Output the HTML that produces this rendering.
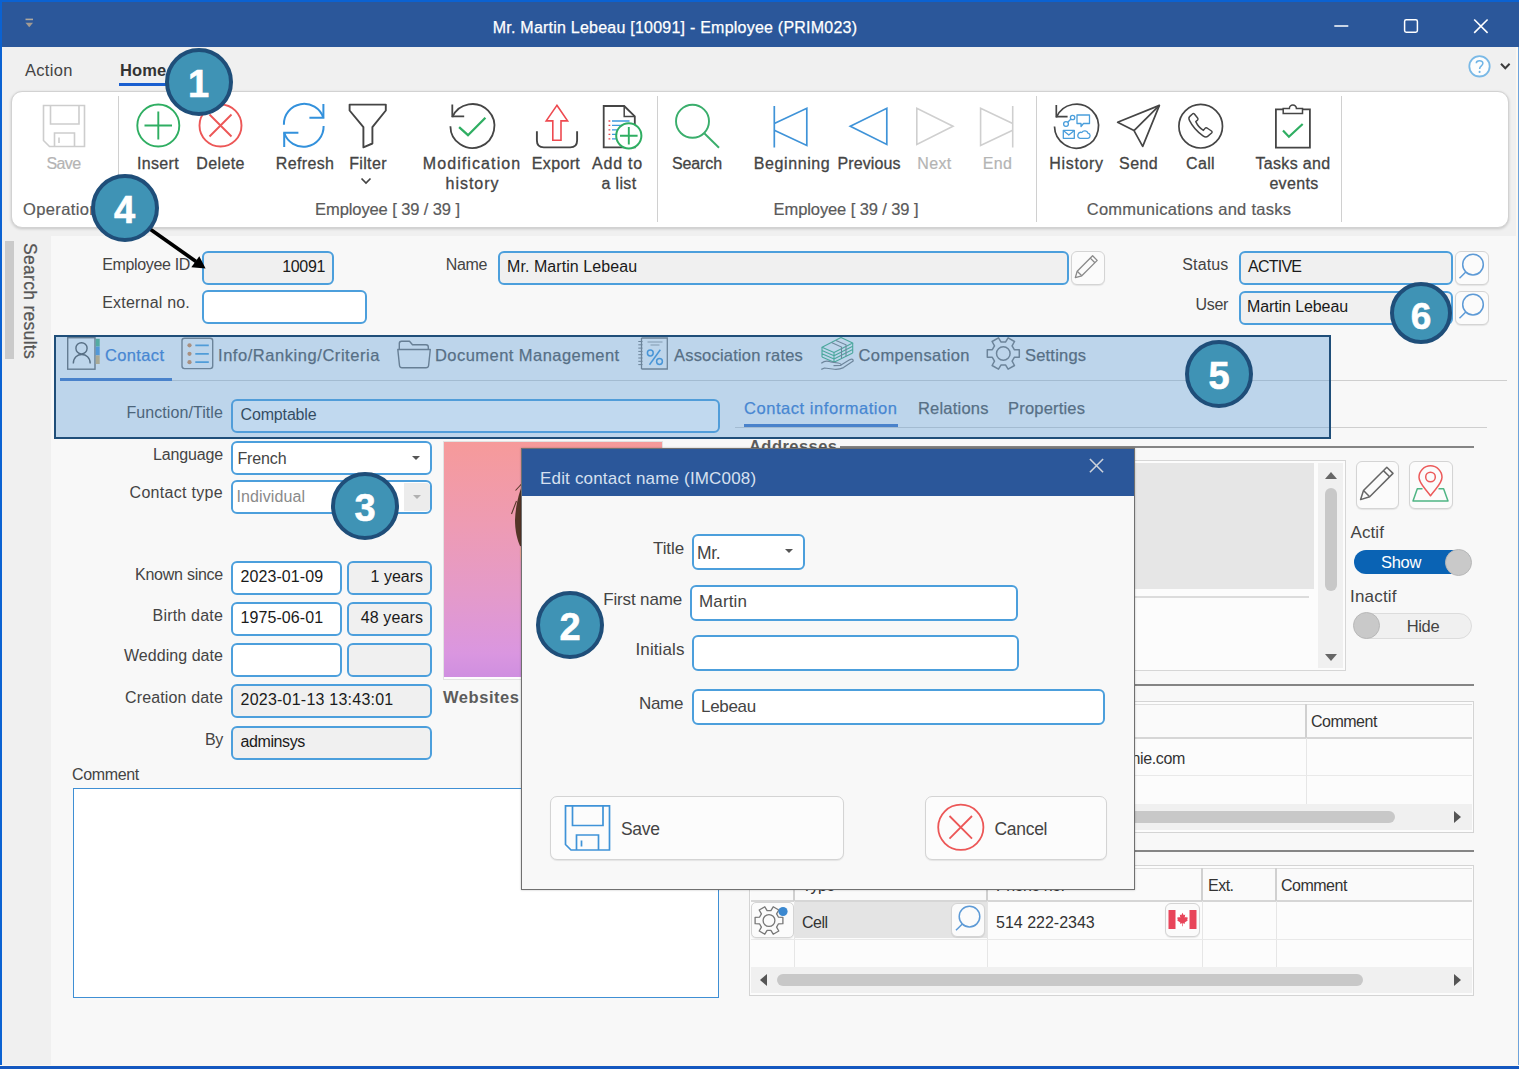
<!DOCTYPE html>
<html>
<head>
<meta charset="utf-8">
<title>Employee</title>
<style>
*{box-sizing:border-box;margin:0;padding:0}
html,body{width:1519px;height:1069px;overflow:hidden}
body{font-family:"Liberation Sans",sans-serif;font-size:16px;color:#333;background:#f0f0f0;position:relative}
.abs{position:absolute}
#win{position:absolute;left:0;top:0;width:1519px;height:1069px;background:#f0f0f0;overflow:hidden}
#titlebar{position:absolute;left:0;top:0;width:1519px;height:47px;background:#2b579a}
#bL{position:absolute;left:0;top:0;width:2px;height:1069px;background:#0b62d2;z-index:50}
#bT{position:absolute;left:0;top:0;width:1519px;height:2px;background:#0b62d2;z-index:50}
#bB{position:absolute;left:0;top:1065px;width:1519px;height:4px;background:linear-gradient(180deg,#fbf7f0 0,#fbf7f0 1.3px,#1458c0 1.3px,#1458c0 4px);z-index:50}
#bR{position:absolute;left:1516px;top:47px;width:3px;height:1022px;background:linear-gradient(90deg,#fbf7f0 0,#fbf7f0 1.6px,#6ea3dd 1.6px,#6ea3dd 3px);z-index:49}
.t{position:absolute;white-space:nowrap;line-height:20px;height:20px}
/* ribbon */
#ribbon{position:absolute;left:11px;top:91px;width:1498px;height:137px;background:#fff;border:1px solid #d2d2d2;border-radius:11px;box-shadow:0 1px 3px rgba(0,0,0,.18)}
.rsep{position:absolute;top:96px;width:1px;height:126px;background:#d0d0d0}
.rl{position:absolute;white-space:nowrap;font-size:16px;line-height:20px;color:#444;-webkit-text-stroke:.3px #444;text-align:center;transform:translateX(-50%);letter-spacing:.35px}
.rl.dis{color:#b4b4b4;-webkit-text-stroke:.2px #b4b4b4}
.gl{position:absolute;white-space:nowrap;font-size:16.5px;line-height:20px;color:#5a5a5a;-webkit-text-stroke:.2px #5a5a5a;top:199px;transform:translateX(-50%);letter-spacing:-.1px}
/* content */
#side{position:absolute;left:2px;top:236px;width:49px;height:830px;background:#f0f0f0}
#main{position:absolute;left:51px;top:236px;width:1465px;height:830px;background:#f8f8f8}
.lbl{position:absolute;white-space:nowrap;font-size:16px;line-height:20px;color:#444;text-align:right;letter-spacing:-.35px}
.inp{position:absolute;border:2px solid #4c9fdc;border-radius:6px;background:#fff;font-size:16px;line-height:29px;color:#1a1a1a;padding-left:7px;white-space:nowrap;overflow:hidden;letter-spacing:-.35px}
.inp.ro{background:#f0f0f0}
.inp.r{text-align:right;padding-right:7px;padding-left:0}
.btn{position:absolute;border:1px solid #d4d4d4;border-radius:6px;background:#fbfbfb;box-shadow:0 1px 1px rgba(0,0,0,.08)}
.tab{position:absolute;top:345px;white-space:nowrap;font-size:16.5px;line-height:20px;color:#555;letter-spacing:.55px;-webkit-text-stroke:.25px currentColor}
.cell{position:absolute;white-space:nowrap;font-size:16px;line-height:20px;color:#333;letter-spacing:-.5px}
.bubble{position:absolute;width:68px;height:68px;border-radius:50%;background:#3f93b5;border:4px solid #1f4e79;color:#fff;font-weight:bold;font-size:38px;line-height:65px;text-align:center;z-index:40;-webkit-text-stroke:.6px #fff}
</style>
</head>
<body>
<div id="win">
<div id="titlebar"></div>
<div class="t" style="left:0;width:1350px;top:18px;text-align:center;color:#fff;font-size:16px;letter-spacing:.23px;-webkit-text-stroke:.25px #fff">Mr. Martin Lebeau [10091] - Employee (PRIM023)</div>

<!-- menu -->
<div class="t" style="left:25px;top:60px;font-size:16.5px;color:#444;letter-spacing:.3px">Action</div>
<div class="t" style="left:120px;top:60px;font-size:16.5px;color:#333;font-weight:bold;letter-spacing:.1px">Home</div>
<div class="abs" style="left:119px;top:83px;width:50px;height:3px;background:#1a5fd0"></div>

<div id="ribbon"></div>
<div class="rsep" style="left:118px"></div>
<div class="rsep" style="left:657px"></div>
<div class="rsep" style="left:1036px"></div>
<div class="rsep" style="left:1341px"></div>
<!-- title bar controls -->
<svg class="abs" style="left:20px;top:14px" width="20" height="18" viewBox="0 0 20 18"><rect x="5.5" y="4.6" width="7.5" height="1.6" fill="#b0a89e"/><path d="M5.5 8.8 L13 8.8 L9.25 13.2 Z" fill="#a39b92"/></svg>
<svg class="abs" style="left:1325px;top:12px" width="180" height="30" viewBox="1325 12 180 30" fill="none" stroke="#fff" stroke-width="1.5"><path d="M1334.3 26 H1348.3"/><rect x="1404.6" y="19.8" width="12.8" height="12.4" rx="1.6"/><path d="M1474.2 19.5 L1487.6 32.9 M1487.6 19.5 L1474.2 32.9" stroke-width="1.6"/></svg>
<!-- help -->
<svg class="abs" style="left:1464px;top:52px" width="50" height="30" viewBox="0 0 50 30" fill="none"><circle cx="15.5" cy="14.3" r="10.2" stroke="#7ab9e6" stroke-width="1.8" fill="#fdfdfd"/><path d="M12.3 11.3 C12.3 7.9 18.9 7.9 18.9 11.3 C18.9 13.9 15.6 13.9 15.6 16.9" stroke="#6fb4e6" stroke-width="1.5"/><circle cx="15.6" cy="19.9" r="1.05" fill="#6fb4e6"/><path d="M37 11.8 L41.3 16.3 L45.6 11.8" stroke="#3c3c3c" stroke-width="2"/></svg>

<!-- ribbon icons: one big svg in page coordinates -->
<svg class="abs" style="left:0;top:95px" width="1519" height="100" viewBox="0 95 1519 100" fill="none" stroke-linecap="butt" stroke-linejoin="miter">
<!-- save (disabled) -->
<g stroke="#cdcdcd" stroke-width="1.6">
<path d="M43.5 105.5 H84.5 V146.5 H49.5 L43.5 140.5 Z"/>
<path d="M50.5 105.5 V124 H79 V105.5"/>
<path d="M54.5 146.5 V133 H74.5 V146.5"/>
<path d="M59 137.5 V143"/>
</g>
<!-- insert -->
<g stroke="#2fae62" stroke-width="1.9"><circle cx="158.3" cy="125.5" r="21"/><path d="M144.5 125.5 H172 M158.3 111.5 V139.5"/></g>
<!-- delete -->
<g stroke="#ec5757" stroke-width="1.9"><circle cx="220.5" cy="125.5" r="21"/><path d="M209.5 114.5 L231.5 136.5 M231.5 114.5 L209.5 136.5"/></g>
<!-- refresh -->
<g stroke="#3391dc" stroke-width="2">
<path d="M283.9 124.8 A20.2 20.2 0 0 1 323.3 117.8"/>
<path d="M309.4 117.8 H323.4 V104"/>
<path d="M323.6 126 A20.2 20.2 0 0 1 284.2 132.8"/>
<path d="M298.4 132.7 H284.2 V146.9"/>
</g>
<!-- filter -->
<g stroke="#454545" stroke-width="1.9">
<path d="M349.6 104.6 H385.8 V110.5 L372.4 127.1 V143.5 L363.4 147.3 V127.1 L349.6 110.5 Z" stroke-linejoin="round"/>
</g>
<path d="M361.5 178.5 L366 183 L370.5 178.5" stroke="#444" stroke-width="1.7"/>
<!-- modification history -->
<g stroke="#454545" stroke-width="1.8">
<path d="M452.3 117.1 A22 22 0 1 1 450.4 126.2"/>
<path d="M452.3 104.5 V116.4 H464.2"/>
</g>
<path d="M459.1 127.2 L468 135.2 L485.4 117.8" stroke="#2fae62" stroke-width="2.3"/>
<!-- export -->
<path d="M536.9 131.2 V140.5 Q536.9 147.4 543.8 147.4 H570.2 Q577.1 147.4 577.1 140.5 V131.2" stroke="#454545" stroke-width="1.9"/>
<path d="M556.9 105.3 L567.6 120.9 H561 V140.3 H552.8 V120.9 H546.2 Z" stroke="#ee4a50" stroke-width="1.6" stroke-linejoin="miter"/>
<!-- add to a list -->
<path d="M603.7 106 H624.2 L634.8 116.4 V147.4 H603.7 Z" stroke="#454545" stroke-width="1.8"/>
<path d="M624.2 106 V116.4 H634.8" stroke="#454545" stroke-width="1.5"/>
<g stroke="#3f9ade" stroke-width="1.3"><path d="M612 121 H629.5 M612 125.4 H626 M612 129.9 H619 M612 134.3 H617 M612 138.8 H617"/></g>
<g stroke="#ee4a50" stroke-width="1.3"><path d="M608.5 121 H610.3 M608.5 125.4 H610.3 M608.5 129.9 H610.3 M608.5 134.3 H610.3 M608.5 138.8 H610.3"/></g>
<circle cx="628.8" cy="135.8" r="12.6" fill="#fff" stroke="#2fae62" stroke-width="2"/>
<path d="M620 135.8 H637.6 M628.8 127 V144.6" stroke="#2fae62" stroke-width="1.9"/>
<!-- search -->
<g stroke="#3aae6c" stroke-width="1.9"><circle cx="692.5" cy="121.3" r="16.5"/><path d="M704.5 133.5 L719 147.8"/></g>
<!-- beginning -->
<g stroke="#3f93d8" stroke-width="1.7"><path d="M774.3 106 V147.5"/><path d="M774.3 123.5 L806.8 108.3 V145.5 L774.3 130.3"/></g>
<!-- previous -->
<path d="M850.3 126.3 L886.8 108.3 V144.5 Z" stroke="#3f93d8" stroke-width="1.7"/>
<!-- next -->
<path d="M953 126.3 L916.8 108.3 V144.5 Z" stroke="#cfcfcf" stroke-width="1.6"/>
<!-- end -->
<g stroke="#cfcfcf" stroke-width="1.6"><path d="M1012.7 106 V147.5"/><path d="M1012.7 123.5 L980.6 108.3 V145.5 L1012.7 130.3"/></g>
<!-- history -->
<g stroke="#454545" stroke-width="1.7">
<path d="M1056.3 117.4 A22 22 0 1 1 1054.5 126.6"/>
<path d="M1056.3 105 V116.7 H1067.6"/>
</g>
<g stroke="#4a9edb" stroke-width="1.3" stroke-linejoin="round">
<path d="M1077 115 H1089.5 V123.5 H1083.5 L1081 126.5 V123.5 H1077 Z"/>
<rect x="1063.3" y="130.3" width="11" height="8"/><path d="M1063.3 130.5 L1068.8 135 L1074.3 130.5"/>
<path d="M1080 138.3 H1088 A2.6 2.6 0 0 0 1088 133.2 A3.4 3.4 0 0 0 1081.8 132.5 A3 3 0 0 0 1080 138.3 Z"/>
<circle cx="1066" cy="124" r="2.4"/><circle cx="1072.6" cy="117.5" r="2.2"/><path d="M1067.7 122.3 L1071 119"/>
</g>
<!-- send -->
<path d="M1159.4 105.4 L1117.6 122.3 L1134 130.6 L1142.7 146.4 Z" stroke="#454545" stroke-width="1.7" stroke-linejoin="round"/>
<path d="M1134 130.6 L1159.4 105.4" stroke="#454545" stroke-width="1.7"/>
<!-- call -->
<circle cx="1200.7" cy="126.2" r="21.8" stroke="#454545" stroke-width="1.7"/>
<path d="M1189.6 116.6 Q1188.2 118 1189.6 120.6 Q1194 129.5 1203 135.8 Q1205.8 137.8 1207.6 136.4 L1211.6 133 Q1212.6 132 1211.5 131 L1207 128 Q1205.8 127.4 1205 128.4 L1203.4 130.4 Q1198.4 127.4 1195.8 121.6 L1197.6 120 Q1198.4 119 1197.6 118 L1194.4 114 Q1193.4 113 1192.4 114 Z" stroke="#454545" stroke-width="1.5" stroke-linejoin="round"/>
<!-- tasks -->
<path d="M1283.2 109.4 H1275.9 V147.6 H1309.9 V109.4 H1302.5" stroke="#454545" stroke-width="1.8"/>
<path d="M1283.2 113.4 V108.4 H1289.4 A3.5 3.5 0 0 1 1296.4 108.4 H1302.5 V113.4 Z" stroke="#454545" stroke-width="1.5"/>
<path d="M1283 130.6 L1288.9 136.8 L1302.7 124" stroke="#2fae62" stroke-width="2.2"/>
</svg>

<!-- ribbon labels -->
<div class="rl dis" style="left:63.5px;top:154px;letter-spacing:-.6px">Save</div>
<div class="rl" style="left:158px;top:154px">Insert</div>
<div class="rl" style="left:220.5px;top:154px">Delete</div>
<div class="rl" style="left:305px;top:154px">Refresh</div>
<div class="rl" style="left:368px;top:154px">Filter</div>
<div class="rl" style="left:472px;top:154px;letter-spacing:1.1px">Modification</div>
<div class="rl" style="left:472.5px;top:174px;letter-spacing:.95px">history</div>
<div class="rl" style="left:556px;top:154px">Export</div>
<div class="rl" style="left:617.5px;top:154px;letter-spacing:.75px">Add to</div>
<div class="rl" style="left:619px;top:174px">a list</div>
<div class="rl" style="left:697px;top:154px;letter-spacing:-.15px">Search</div>
<div class="rl" style="left:792px;top:154px;letter-spacing:.6px">Beginning</div>
<div class="rl" style="left:869px;top:154px;letter-spacing:.1px">Previous</div>
<div class="rl dis" style="left:934.5px;top:154px">Next</div>
<div class="rl dis" style="left:997.5px;top:154px">End</div>
<div class="rl" style="left:1076.5px;top:154px;letter-spacing:.65px">History</div>
<div class="rl" style="left:1138.5px;top:154px">Send</div>
<div class="rl" style="left:1200.5px;top:154px">Call</div>
<div class="rl" style="left:1293px;top:154px">Tasks and</div>
<div class="rl" style="left:1294px;top:174px">events</div>
<div class="gl" style="left:23px;transform:none;letter-spacing:.37px">Operations</div>
<div class="gl" style="left:387.5px">Employee [ 39 / 39 ]</div>
<div class="gl" style="left:846px">Employee [ 39 / 39 ]</div>
<div class="gl" style="left:1189px;letter-spacing:.27px">Communications and tasks</div>

<!--RIBBON-END-->

<div id="side"></div>
<div id="main"></div>
<!-- side -->
<div class="abs" style="left:5px;top:240.7px;width:8.5px;height:118px;background:#cacaca"></div>
<div class="abs" style="left:39px;top:243px;font-size:17.5px;line-height:18px;color:#555;white-space:nowrap;transform-origin:0 0;transform:rotate(90deg);letter-spacing:.3px;-webkit-text-stroke:.25px #555">Search results</div>

<!-- top form -->
<div class="lbl" style="left:60px;width:130px;top:255px">Employee ID</div>
<div class="inp ro r" style="left:202px;top:251px;width:132px;height:33.5px;line-height:27px">10091</div>
<div class="lbl" style="left:60px;width:130px;top:293px;letter-spacing:.2px">External no.</div>
<div class="inp" style="left:202px;top:289.5px;width:165px;height:34px"></div>
<div class="lbl" style="left:400px;width:87px;top:255px">Name</div>
<div class="inp ro" style="left:498px;top:251px;width:571px;height:33.5px;line-height:27px;letter-spacing:.07px">Mr. Martin Lebeau</div>
<div class="btn" style="left:1071px;top:251px;width:34px;height:34px"></div>
<div class="lbl" style="left:1140px;width:88.5px;top:255px;letter-spacing:.15px">Status</div>
<div class="inp ro" style="left:1239px;top:251px;width:214px;height:34px;line-height:27.5px;letter-spacing:-.75px">ACTIVE</div>
<div class="btn" style="left:1455px;top:251px;width:34px;height:34px"></div>
<div class="lbl" style="left:1140px;width:88px;top:295px">User</div>
<div class="inp ro" style="left:1239px;top:291px;width:214px;height:34px;line-height:27px;padding-left:6px;letter-spacing:-.1px">Martin Lebeau</div>
<div class="btn" style="left:1455px;top:291px;width:34px;height:34px"></div>

<!-- main tabs -->
<div class="abs" style="left:60px;top:380px;width:1447px;height:1px;background:#cfcfcf"></div>
<div class="abs" style="left:60px;top:378px;width:112px;height:3px;background:#3f74c6"></div>
<div class="tab" style="left:105px;color:#3c7bd0;letter-spacing:.35px">Contact</div>
<div class="tab" style="left:218px">Info/Ranking/Criteria</div>
<div class="tab" style="left:435px;letter-spacing:.45px">Document Management</div>
<div class="tab" style="left:674px;letter-spacing:.2px">Association rates</div>
<div class="tab" style="left:858.5px;letter-spacing:.42px">Compensation</div>
<div class="tab" style="left:1025px;letter-spacing:.2px">Settings</div>

<div class="lbl" style="left:90px;width:133px;top:403px;letter-spacing:.08px">Function/Title</div>
<div class="inp" style="left:231px;top:399px;width:489px;height:34px;line-height:27px;letter-spacing:-.15px;padding-left:7.5px">Comptable</div>

<!-- sub tabs -->
<div class="abs" style="left:735px;top:427px;width:752px;height:1px;background:#cfcfcf"></div>
<div class="abs" style="left:744px;top:424px;width:154px;height:3px;background:#3f74c6"></div>
<div class="tab" style="left:744px;top:398px;color:#3c7bd0">Contact information</div>
<div class="tab" style="left:918px;top:398px;letter-spacing:.2px">Relations</div>
<div class="tab" style="left:1008px;top:398px;letter-spacing:.2px">Properties</div>

<!-- left column -->
<div class="lbl" style="left:90px;width:133px;top:445px;letter-spacing:-.15px">Language</div>
<div class="inp" style="left:231px;top:441px;width:201px;height:34px;padding-left:4.5px;color:#444;letter-spacing:-.15px;line-height:31px">French</div>
<div class="abs" style="left:412px;top:456px;width:0;height:0;border-left:4px solid transparent;border-right:4px solid transparent;border-top:4px solid #555"></div>
<div class="lbl" style="left:90px;width:133px;top:483px;letter-spacing:.3px">Contact type</div>
<div class="inp" style="left:231px;top:480px;width:201px;height:34px;padding-left:3.5px;color:#8a8a8a;letter-spacing:.1px">Individual</div>
<div class="abs" style="left:404px;top:483px;width:26px;height:28px;background:#ececec;border-radius:0 4px 4px 0"></div>
<div class="abs" style="left:413px;top:495px;width:0;height:0;border-left:4px solid transparent;border-right:4px solid transparent;border-top:4px solid #b0b0b0"></div>

<div class="lbl" style="left:90px;width:133px;top:565px;letter-spacing:-.25px">Known since</div>
<div class="inp" style="left:231px;top:561px;width:111px;height:34px;padding-left:7.5px;line-height:27.5px;letter-spacing:.08px">2023-01-09</div>
<div class="inp ro r" style="left:347px;top:561px;width:85px;height:34px;line-height:27.5px;letter-spacing:0px">1 years</div>
<div class="lbl" style="left:90px;width:133px;top:606px;letter-spacing:.2px">Birth date</div>
<div class="inp" style="left:231px;top:602px;width:111px;height:34px;padding-left:7.5px;line-height:27.5px;letter-spacing:.08px">1975-06-01</div>
<div class="inp ro r" style="left:347px;top:602px;width:85px;height:34px;line-height:27.5px;letter-spacing:.1px">48 years</div>
<div class="lbl" style="left:90px;width:133px;top:646px;letter-spacing:.05px">Wedding date</div>
<div class="inp" style="left:231px;top:643px;width:111px;height:34px"></div>
<div class="inp ro" style="left:347px;top:643px;width:85px;height:34px"></div>
<div class="lbl" style="left:90px;width:133px;top:688px;letter-spacing:.15px">Creation date</div>
<div class="inp ro" style="left:231px;top:684px;width:201px;height:34px;padding-left:7.5px;line-height:27.5px;letter-spacing:.23px">2023-01-13 13:43:01</div>
<div class="lbl" style="left:90px;width:133px;top:730px">By</div>
<div class="inp ro" style="left:231px;top:726px;width:201px;height:34px;padding-left:7.5px;line-height:27px;letter-spacing:-.4px">adminsys</div>
<div class="lbl" style="left:72px;top:765px;text-align:left">Comment</div>
<div class="abs" style="left:72.5px;top:788px;width:646px;height:209.5px;background:#fff;border:1.5px solid #3f8fd4"></div>

<!-- photo -->
<div class="abs" style="left:442.5px;top:441px;width:220px;height:239px;background:#fdfdfd;border:1px solid #e2e2e2"></div><div class="abs" style="left:444px;top:442px;width:218px;height:235px;background:linear-gradient(180deg,#f69a9a 0%,#ee9bb3 35%,#e49aca 65%,#da96e0 90%,#cf8fe0 100%)"></div>
<svg class="abs" style="left:505px;top:478px" width="20" height="95" viewBox="505 478 20 95"><path d="M522 486 C518.5 494 515.3 508 515 520 C515 531 517.3 540 520 546 L522 546.5 Z" fill="#553527"/><path d="M521.5 484 L515.5 490.5 M516.5 501 L511.5 514" stroke="#5a3a2c" stroke-width="1.1"/><path d="M522 546.5 L520.3 547 C519.3 553 520 560 522 565 Z" fill="#f2a99a"/></svg>
<div class="abs" style="left:443px;top:687px;font-weight:bold;font-size:16.5px;line-height:20px;color:#5c5c5c;letter-spacing:.55px">Websites</div>

<!-- addresses -->
<div class="abs" style="left:749px;top:436px;font-weight:bold;font-size:16.5px;line-height:20px;color:#5c5c5c;letter-spacing:.45px">Addresses</div>
<div class="abs" style="left:840px;top:446px;width:634px;height:1.6px;background:#858585"></div>
<div class="abs" style="left:1100px;top:460px;width:246px;height:211px;background:#fcfcfc;border:1px solid #d6d6d6"></div>
<div class="abs" style="left:1100px;top:463px;width:214px;height:126px;background:#e6e6e6"></div>
<div class="abs" style="left:1100px;top:595.5px;width:209px;height:2px;background:#dcdcdc"></div>
<div class="abs" style="left:1318px;top:463px;width:25px;height:205px;background:#f0f0f0"></div>
<div class="abs" style="left:1325px;top:488px;width:12px;height:103px;background:#c8c8c8;border-radius:6px"></div>
<div class="abs" style="left:1325px;top:472px;width:0;height:0;border-left:6px solid transparent;border-right:6px solid transparent;border-bottom:7px solid #666"></div>
<div class="abs" style="left:1325px;top:654px;width:0;height:0;border-left:6px solid transparent;border-right:6px solid transparent;border-top:7px solid #666"></div>
<div class="btn" style="left:1356px;top:461px;width:43px;height:48px"></div>
<div class="btn" style="left:1409px;top:461px;width:44px;height:48px"></div>
<div class="lbl" style="left:1350.5px;top:523px;text-align:left;font-size:17px;letter-spacing:.1px">Actif</div>
<div class="abs" style="left:1354px;top:550px;width:117px;height:24px;border-radius:12px;background:#0a63b4"></div>
<div class="abs" style="left:1354px;top:552px;width:94px;text-align:center;color:#fff;font-size:16.5px;line-height:20px;letter-spacing:-.3px">Show</div>
<div class="abs" style="left:1445px;top:548.5px;width:27px;height:27px;border-radius:50%;background:#c9c9c9;border:1px solid #b8b8b8"></div>
<div class="lbl" style="left:1350px;top:587px;text-align:left;font-size:17px;letter-spacing:.2px">Inactif</div>
<div class="abs" style="left:1354px;top:612.5px;width:118px;height:26px;border-radius:13px;background:#f0f0f0;border:1px solid #dcdcdc"></div>
<div class="abs" style="left:1376px;top:615.5px;width:94px;text-align:center;color:#444;font-size:16.5px;line-height:20px;letter-spacing:-.3px">Hide</div>
<div class="abs" style="left:1352.7px;top:612.3px;width:27px;height:27px;border-radius:50%;background:#c9c9c9;border:1px solid #b8b8b8"></div>

<!-- email grid -->
<div class="abs" style="left:1100px;top:684.2px;width:374px;height:1.6px;background:#858585"></div>
<div class="abs" style="left:1100px;top:700.5px;width:374px;height:132px;background:#fcfcfc;border:1.5px solid #d4d4d4"></div>
<div class="abs" style="left:1100px;top:703.5px;width:372px;height:35px;background:#fafafa;border-bottom:2px solid #d6d6d6;border-top:1.5px solid #dedede"></div>
<div class="abs" style="left:1305px;top:704px;width:2px;height:34px;background:#d0d0d0"></div>
<div class="abs" style="left:1306px;top:738px;width:1px;height:66px;background:#e6e6e6"></div>
<div class="abs" style="left:1100px;top:775px;width:372px;height:1px;background:#e9e9e9"></div>
<div class="cell" style="left:1311px;top:712px">Comment</div>
<div class="cell" style="left:1085px;width:100px;text-align:right;top:749px;letter-spacing:-.35px">nie.com</div>
<div class="abs" style="left:1100px;top:804px;width:372px;height:26px;background:#f0f0f0"></div>
<div class="abs" style="left:1100px;top:811px;width:295px;height:12px;background:#c8c8c8;border-radius:0 6px 6px 0"></div>
<div class="abs" style="left:1454px;top:811px;width:0;height:0;border-top:6px solid transparent;border-bottom:6px solid transparent;border-left:7px solid #555"></div>

<!-- phone grid -->
<div class="abs" style="left:1100px;top:850.2px;width:374px;height:1.6px;background:#858585"></div>
<div class="abs" style="left:749px;top:864.5px;width:725px;height:131px;background:#fcfcfc;border:1.5px solid #d4d4d4"></div>
<div class="abs" style="left:751px;top:867.5px;width:721px;height:34px;background:#fafafa;border-bottom:2px solid #d6d6d6;border-top:1.5px solid #dedede"></div>
<div class="abs" style="left:793px;top:868px;width:2px;height:33px;background:#d0d0d0"></div>
<div class="abs" style="left:986px;top:868px;width:2px;height:33px;background:#d0d0d0"></div>
<div class="abs" style="left:1201px;top:868px;width:2px;height:33px;background:#d0d0d0"></div>
<div class="abs" style="left:1275px;top:868px;width:2px;height:33px;background:#d0d0d0"></div>
<div class="cell" style="left:802px;top:876px">Type</div>
<div class="cell" style="left:996px;top:876px">Phone no.</div>
<div class="cell" style="left:1208px;top:875.5px">Ext.</div>
<div class="cell" style="left:1281px;top:875.5px">Comment</div>
<div class="abs" style="left:794px;top:901px;width:1px;height:66px;background:#e6e6e6"></div>
<div class="abs" style="left:987px;top:901px;width:1px;height:66px;background:#e6e6e6"></div>
<div class="abs" style="left:1202px;top:901px;width:1px;height:66px;background:#e6e6e6"></div>
<div class="abs" style="left:1276px;top:901px;width:1px;height:66px;background:#e6e6e6"></div>
<div class="abs" style="left:751px;top:939px;width:721px;height:1px;background:#e9e9e9"></div>
<div class="abs" style="left:795px;top:902px;width:192px;height:36px;background:#e4e4e4"></div>
<div class="btn" style="left:751px;top:902px;width:43px;height:36px;border-radius:5px"></div>
<div class="cell" style="left:802px;top:912.5px">Cell</div>
<div class="btn" style="left:951px;top:903px;width:34px;height:34px"></div>
<div class="cell" style="left:996px;top:912.5px;letter-spacing:0">514 222-2343</div>
<div class="btn" style="left:1165px;top:903px;width:35px;height:34px"></div>
<div class="abs" style="left:751px;top:967px;width:721px;height:26px;background:#f0f0f0"></div>
<div class="abs" style="left:777px;top:974px;width:586px;height:12px;background:#c8c8c8;border-radius:6px"></div>
<div class="abs" style="left:760px;top:974px;width:0;height:0;border-top:6px solid transparent;border-bottom:6px solid transparent;border-right:7px solid #555"></div>
<div class="abs" style="left:1454px;top:974px;width:0;height:0;border-top:6px solid transparent;border-bottom:6px solid transparent;border-left:7px solid #555"></div>
<!-- content icons in page coordinates -->
<svg class="abs" style="left:0;top:236px" width="1519" height="780" viewBox="0 236 1519 780" fill="none">
<!-- pencil (name) -->
<g stroke="#8a8a8a" stroke-width="1.3" stroke-linejoin="round">
<path d="M1075.3 277.6 L1077.2 271.2 L1092.6 255.8 L1097.2 260.4 L1081.8 275.8 Z"/>
<path d="M1077.2 271.2 L1081.8 275.8 M1090.3 258.1 L1094.9 262.7"/>
</g>
<!-- magnifiers -->
<g stroke="#5d9ad6" stroke-width="1.5"><circle cx="1473" cy="264.6" r="10.3"/><path d="M1465.8 272 L1459.5 278.3"/></g>
<g stroke="#5d9ad6" stroke-width="1.5"><circle cx="1473" cy="304.6" r="10.3"/><path d="M1465.8 312 L1459.5 318.3"/></g>
<g stroke="#5d9ad6" stroke-width="1.5"><circle cx="969.5" cy="916.6" r="10.3"/><path d="M962.3 924 L956 930.3"/></g>
<!-- contact tab icon -->
<rect x="67.7" y="337.7" width="27.3" height="31.5" stroke="#6a6a6a" stroke-width="1.4"/>
<circle cx="81.5" cy="348.3" r="5.6" stroke="#555" stroke-width="1.4"/>
<path d="M73.3 363.5 C73.3 351.5 90.2 351.5 90.2 363.5" stroke="#555" stroke-width="1.4"/>
<rect x="95.7" y="338.8" width="4" height="7.8" fill="#4fb584"/>
<rect x="95.7" y="346.6" width="4" height="8.8" fill="#4e97d9"/>
<rect x="95.7" y="355.4" width="4" height="8.6" fill="#d9b26f"/>
<!-- info tab icon -->
<rect x="182" y="338.3" width="30.7" height="30.3" rx="2.5" stroke="#777" stroke-width="1.4"/>
<g stroke="#4a9edb" stroke-width="1.7"><path d="M195.3 345.3 H208.8 M195.3 353.8 H208.8 M195.3 362.2 H208.8"/></g>
<g fill="#d98a4e"><circle cx="189.5" cy="345.3" r="2.1"/><circle cx="189.5" cy="353.8" r="2.1"/><circle cx="189.5" cy="362.2" r="2.1"/></g>
<!-- folder tab icon -->
<g stroke="#6f6f6f" stroke-width="1.4" stroke-linejoin="round">
<path d="M399.3 349.5 V343.5 Q399.3 341.3 401.5 341.3 H409.5 L412.5 344.8 H426 Q428.3 344.8 428.3 347 V349.5"/>
<path d="M397.8 349.5 H430.3 L428.6 365.5 Q428.3 367.8 426 367.8 H402 Q399.8 367.8 399.5 365.5 Z"/>
</g>
<!-- association rates tab icon -->
<g stroke="#777" stroke-width="1.3">
<path d="M641.5 338 H667.3 V369 H641.5"/>
<path d="M641.5 338 V369"/>
<path d="M638.3 341.5 H642.5 M638.3 344.8 H642.5 M638.3 348.1 H642.5 M638.3 351.4 H642.5 M638.3 354.7 H642.5 M638.3 358 H642.5 M638.3 361.3 H642.5 M638.3 364.6 H642.5" stroke-width="1"/>
<path d="M647.5 342 H662.5 M650.5 345 H659.5" stroke="#999" stroke-width="1.2"/>
</g>
<g stroke="#3f93d8" stroke-width="1.5"><circle cx="650.3" cy="353" r="2.9"/><circle cx="659.5" cy="361.5" r="2.9"/><path d="M660.3 349.8 L649.5 364.8"/></g>
<!-- compensation tab icon -->
<g stroke="#43b07c" stroke-width="1.1" stroke-linejoin="round">
<path d="M822 347.2 L841 337.6 L852.7 343 L834 352.4 Z"/>
<path d="M822 350.5 L834 355.7 L852.7 346.3 M822 353.8 L834 359 L852.7 349.6 M822 357.1 L834 362.3 L852.7 352.9 M822 347.2 V357.1 M852.7 343 V352.9 M834 352.4 V362.3"/>
</g>
<path d="M831.5 342.6 L841.5 347 V358.5 M836 340.4 L846 344.8 V356.3" stroke="#7a7a7a" stroke-width="1.1"/>
<path d="M821.3 363.3 Q825.5 359.8 830.5 361.8 L838 363 Q841.5 363.5 841 365.4 L833.5 365.6 M841 365 L850 359.6 Q853.3 358.4 853.2 361 L843.5 367.6 Q838.5 370 832.5 369 L824.5 368 L821.3 369.4" stroke="#7a7a7a" stroke-width="1.2" stroke-linejoin="round"/>
<!-- settings gear -->
<g stroke="#777" stroke-width="1.5" stroke-linejoin="round"><path d="M1014.3 349.7 L1019.3 349.8 L1019.3 357.2 L1014.3 357.3 L1012.1 361.1 L1014.5 365.5 L1008.1 369.2 L1005.5 364.9 L1001.1 364.9 L998.5 369.2 L992.1 365.5 L994.5 361.1 L992.3 357.3 L987.3 357.2 L987.3 349.8 L992.3 349.7 L994.5 345.9 L992.1 341.5 L998.5 337.8 L1001.1 342.1 L1005.5 342.1 L1008.1 337.8 L1014.5 341.5 L1012.1 345.9 Z"/><circle cx="1003.3" cy="353.5" r="6.8"/></g>
<!-- address pencil -->
<g stroke="#666" stroke-width="1.5" stroke-linejoin="round">
<path d="M1360.6 499.6 L1363.5 490.5 L1386.8 467.2 L1393 473.4 L1369.7 496.7 Z"/>
<path d="M1363.5 490.5 L1369.7 496.7 M1383.4 470.6 L1389.6 476.8"/>
</g>
<!-- map icon -->
<path d="M1422.5 488.7 H1417.3 L1413 501 H1448 L1443.6 488.7 H1438.5" stroke="#4fb584" stroke-width="1.5" stroke-linejoin="round"/>
<path d="M1430.5 495.8 C1425 488 1419 483.5 1419 477.3 A11.5 11.5 0 0 1 1442 477.3 C1442 483.5 1436 488 1430.5 495.8 Z" stroke="#ec5a5a" stroke-width="1.5" stroke-linejoin="round"/>
<circle cx="1430.5" cy="477" r="4.8" stroke="#ec5a5a" stroke-width="1.5"/>
<!-- grid gear -->
<g stroke="#777" stroke-width="1.3" stroke-linejoin="round"><path d="M778.5 917.2 L782.9 917.3 L782.9 923.7 L778.5 923.8 L776.6 927.1 L778.8 931.0 L773.2 934.2 L770.9 930.4 L767.1 930.4 L764.8 934.2 L759.2 931.0 L761.4 927.1 L759.5 923.8 L755.1 923.7 L755.1 917.3 L759.5 917.2 L761.4 913.9 L759.2 910.0 L764.8 906.8 L767.1 910.6 L770.9 910.6 L773.2 906.8 L778.8 910.0 L776.6 913.9 Z"/><circle cx="769" cy="920.5" r="5.9"/></g>
<circle cx="783" cy="911.5" r="4.6" fill="#3b88d0"/>
<!-- canada flag -->
<rect x="1168.5" y="910" width="28" height="19" fill="#fff"/>
<rect x="1168.5" y="910" width="7" height="19" fill="#e8455a"/>
<rect x="1189.5" y="910" width="7" height="19" fill="#e8455a"/>
<path d="M1182.5 911 L1184 914 L1185.8 913.3 L1185.2 917.2 L1187 915.8 L1187.4 917 L1189 916.8 L1188.3 919.6 L1188.9 920.4 L1185.2 923 L1185.6 924.4 L1182.9 924 L1182.9 927.6 H1182.1 L1182.1 924 L1179.4 924.4 L1179.8 923 L1176.1 920.4 L1176.7 919.6 L1176 916.8 L1177.6 917 L1178 915.8 L1179.8 917.2 L1179.2 913.3 L1181 914 Z" fill="#e8455a" transform="translate(1182.5 919.5) scale(.82) translate(-1182.5 -919.3)"/>
</svg>

<!-- blue highlight box -->
<div class="abs" style="left:54px;top:335px;width:1277px;height:104px;background:rgba(91,155,213,.375);border:2.5px solid #1f4e79;z-index:20"></div>

<!-- dialog -->
<div class="abs" style="left:521px;top:448px;width:614px;height:442px;background:#f8f8f8;border:1.5px solid #707070;z-index:30;box-shadow:0 0 2px rgba(0,0,0,.25)">
<div class="abs" style="left:0;top:0;width:612px;height:47px;background:#2b579a"></div>
<div class="abs" style="left:18px;top:19.5px;font-size:17px;line-height:20px;color:#d6e0f0;letter-spacing:.18px;white-space:nowrap">Edit contact name (IMC008)</div>
<svg class="abs" style="left:563px;top:5px" width="24" height="24" viewBox="0 0 24 24"><path d="M4.9 5 L18.1 18.2 M18.1 5 L4.9 18.2" stroke="#cdd2da" stroke-width="1.6" fill="none"/></svg>
</div>
<div style="position:absolute;left:0;top:0;z-index:31">
<div class="lbl" style="left:584px;width:100px;top:539px;font-size:17px;letter-spacing:-.1px">Title</div>
<div class="inp" style="left:692px;top:534px;width:113px;height:35.5px;padding-left:3px;line-height:34px;color:#444;font-size:17.5px">Mr.</div>
<div class="abs" style="left:785px;top:549px;width:0;height:0;border-left:4px solid transparent;border-right:4px solid transparent;border-top:4px solid #555"></div>
<div class="lbl" style="left:562px;width:120px;top:590px;font-size:17px;letter-spacing:-.15px">First name</div>
<div class="inp" style="left:690px;top:585px;width:328px;height:36px;line-height:30px;color:#444;font-size:17px;letter-spacing:.15px">Martin</div>
<div class="lbl" style="left:583px;width:100px;top:640px;font-size:17px;letter-spacing:.1px;width:101.5px">Initials</div>
<div class="inp" style="left:692px;top:635px;width:327px;height:36px"></div>
<div class="lbl" style="left:583px;width:100px;top:694px;font-size:17px">Name</div>
<div class="inp" style="left:692px;top:689px;width:413px;height:36px;line-height:31px;color:#444;font-size:17px;letter-spacing:-.3px">Lebeau</div>
<div class="btn" style="left:550px;top:796px;width:294px;height:64px;border-radius:7px;background:#fcfcfc"></div>
<div class="btn" style="left:925px;top:796px;width:182px;height:64px;border-radius:7px;background:#fcfcfc"></div>
<svg class="abs" style="left:560px;top:800px" width="440" height="56" viewBox="560 800 440 56" fill="none">
<g stroke="#3f93d8" stroke-width="1.7">
<path d="M565.5 805.8 H609.5 V850 H571 L565.5 844.5 Z"/>
<path d="M572.5 805.8 V825.5 H603 V805.8"/>
<path d="M576.5 850 V835 H598.5 V850"/>
<path d="M581.5 840.5 V846.5"/>
</g>
<g stroke="#ec5757" stroke-width="1.8"><circle cx="960.8" cy="827.3" r="22.6"/><path d="M949.5 816 L972 838.6 M972 816 L949.5 838.6"/></g>
</svg>
<div class="abs" style="left:621px;top:818.7px;font-size:17.5px;line-height:20px;color:#444;letter-spacing:-.3px">Save</div>
<div class="abs" style="left:994.5px;top:819px;font-size:17.5px;line-height:20px;color:#444;letter-spacing:-.3px">Cancel</div>
</div>

<!-- arrow -->
<svg class="abs" style="left:100px;top:200px;z-index:39" width="140" height="90" viewBox="100 200 140 90"><path d="M140 222 L196 261.5" stroke="#000" stroke-width="3.7" fill="none"/><path d="M205.6 268.6 L191.3 267.2 L199.3 256.3 Z" fill="#000"/></svg>
<!-- bubbles -->
<div class="bubble" style="left:164.5px;top:48px">1</div>
<div class="bubble" style="left:90.5px;top:174px">4</div>
<div class="bubble" style="left:331px;top:472px">3</div>
<div class="bubble" style="left:536px;top:591px">2</div>
<div class="bubble" style="left:1185px;top:340px">5</div>
<div class="bubble" style="left:1390px;top:281.5px;width:62px;height:62px;line-height:62px;font-size:37px">6</div>



</div>
<div id="bL"></div><div id="bT"></div><div id="bB"></div><div id="bR"></div>
</body>
</html>
